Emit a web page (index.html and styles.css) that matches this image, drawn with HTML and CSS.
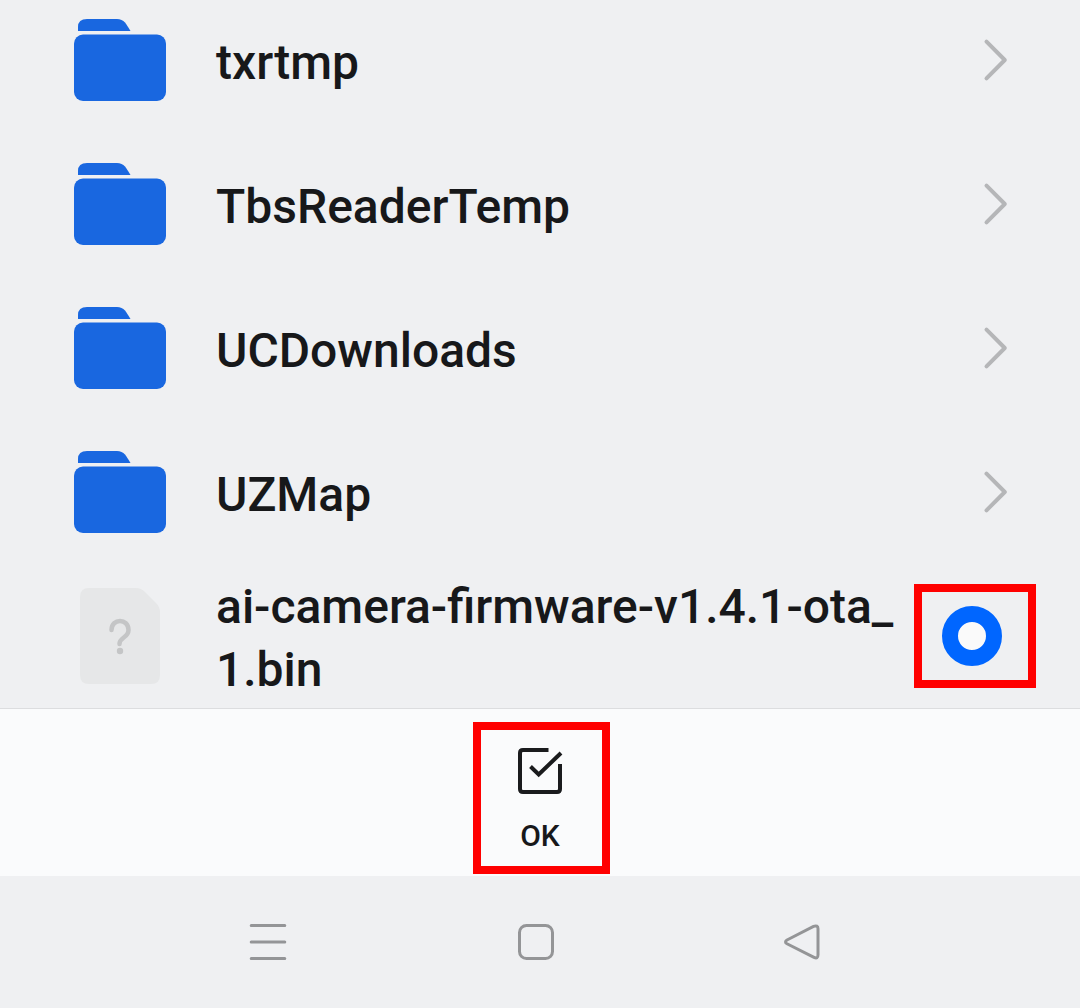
FILE: index.html
```html
<!DOCTYPE html>
<html lang="en">
<head>
<meta charset="utf-8">
<title>Select file</title>
<link rel="stylesheet" href="styles.css">
</head>
<body>
<svg class="defs" aria-hidden="true">
  <symbol id="folder" viewBox="0 0 92 82">
    <path d="M4 12V8Q4 0 13 0H43Q48 0 51 3.500Q53 6 56.500 12Z"/>
    <rect x="0" y="15.5" width="92" height="66.5" rx="9"/>
  </symbol>
  <symbol id="chevron" viewBox="0 0 26 44">
    <path d="M3.500 3.700L21.800 22L3.500 40.300"/>
  </symbol>
</svg>
<main class="screen">
  <ul class="files">
    <li class="row"><svg class="folder"><use href="#folder"/></svg><span class="name">txrtmp</span><svg class="chevron"><use href="#chevron"/></svg></li>
    <li class="row"><svg class="folder"><use href="#folder"/></svg><span class="name">TbsReaderTemp</span><svg class="chevron"><use href="#chevron"/></svg></li>
    <li class="row"><svg class="folder"><use href="#folder"/></svg><span class="name">UCDownloads</span><svg class="chevron"><use href="#chevron"/></svg></li>
    <li class="row"><svg class="folder"><use href="#folder"/></svg><span class="name">UZMap</span><svg class="chevron"><use href="#chevron"/></svg></li>
    <li class="row">
      <svg class="unknown" viewBox="0 0 80 96">
        <path class="sheet" d="M9 0H56Q61 0 65 4L76 15Q80 19 80 24V87Q80 96 71 96H9Q0 96 0 87V9Q0 0 9 0Z"/>
        <path class="mark" d="M31.500 42C31.500 30 48.500 30 48.500 42C48.500 50 39.500 49 39.500 56"/>
        <circle class="dot" cx="40" cy="63" r="3.200"/>
      </svg>
      <span class="name name-wrapped">ai-camera-firmware-v1.4.1-ota_<br>1.bin</span>
      <span class="radio-frame"><span class="radio"></span></span>
    </li>
  </ul>
  <div class="actions">
    <button class="ok">
      <svg class="check" viewBox="0 0 46 48">
        <path d="M31.500 2H6Q3 2 3 5V41Q3 44 6 44H40Q43 44 43 41V16"/>
        <path d="M13.500 18.500L21.700 26.500L44 5"/>
      </svg>
      <span class="ok-label">OK</span>
    </button>
  </div>
  <nav class="navbar">
    <svg class="nav-icon" viewBox="0 0 40 40"><path d="M3.200 3.500H36.800M3.200 20H36.800M3.200 36.500H36.800"/></svg>
    <svg class="nav-icon" viewBox="0 0 40 40"><rect x="3.500" y="3.500" width="33" height="33" rx="7"/></svg>
    <svg class="nav-icon" viewBox="0 0 40 40"><path d="M3 18L29.500 4.300Q34 2.800 34 6.800V32.800Q34 37.300 30 35.300L3 21.800Q0 20 3 18Z"/></svg>
  </nav>
</main>
</body>
</html>
```
FILE: styles.css
```css
* { box-sizing: border-box; }

body {
  margin: 0;
  background: #eff0f2;
  color: #17181a;
  font-family: Roboto, "Liberation Sans", sans-serif;
}

.defs { display: none; }

.screen {
  display: flex;
  flex-direction: column;
  width: 1080px;
  height: 1008px;
  overflow: hidden;
}

/* The list is scrolled to its end, so the first row is cut at the top. */
.files {
  display: flex;
  flex-direction: column;
  justify-content: flex-end;
  height: 708px;
  margin: 0;
  padding: 0;
  list-style: none;
}

.row {
  display: flex;
  flex: none;
  align-items: center;
  height: 144px;
  padding-left: 74px;
}

.folder {
  width: 92px;
  height: 82px;
  fill: #1967e0;
}

.name {
  flex: 1;
  margin-left: 50px;
  padding-top: 5px;
  font-size: 48px;
  font-weight: 500;
  line-height: 63px;
  white-space: nowrap;
}

.name-wrapped { padding-top: 4px; }

.chevron {
  width: 26px;
  height: 44px;
  margin-right: 71px;
  fill: none;
  stroke: #b5b6b8;
  stroke-width: 4;
  stroke-linecap: round;
  stroke-linejoin: round;
}

.unknown {
  width: 80px;
  height: 96px;
  margin: 0 6px;
}

.sheet { fill: #e6e7e8; }

.mark {
  fill: none;
  stroke: #c4c5c6;
  stroke-width: 4.5;
  stroke-linecap: round;
}

.dot { fill: #c4c5c6; }

.radio-frame {
  display: flex;
  flex: none;
  align-items: center;
  justify-content: center;
  width: 122px;
  height: 104px;
  margin-right: 44px;
  border: 8px solid #f00;
  padding-right: 6px;
}

.radio {
  width: 60px;
  height: 60px;
  border: 16px solid #06f;
  border-radius: 50%;
  background: #fafafa;
}

.actions {
  display: flex;
  justify-content: center;
  height: 168px;
  padding: 13px 0 0 3px;
  border-top: 1px solid #dcdddf;
  background: #fafbfc;
}

.ok {
  display: flex;
  flex-direction: column;
  align-items: center;
  width: 137px;
  height: 152px;
  padding: 18px 3px 0 0;
  border: 8px solid #f00;
  background: none;
  color: inherit;
  font: inherit;
}

.check {
  width: 46px;
  height: 48px;
  fill: none;
  stroke: #1a1b1d;
  stroke-width: 4;
}

.ok-label {
  margin-top: 22px;
  font-size: 30px;
  font-weight: 500;
  line-height: 36px;
}

.navbar {
  display: flex;
  flex: 1;
  gap: 228px;
  align-items: center;
  padding: 0 0 0 248px;
}

.nav-icon {
  width: 40px;
  height: 40px;
  fill: none;
  stroke: #949597;
  stroke-width: 3;
  stroke-linecap: round;
}
```
